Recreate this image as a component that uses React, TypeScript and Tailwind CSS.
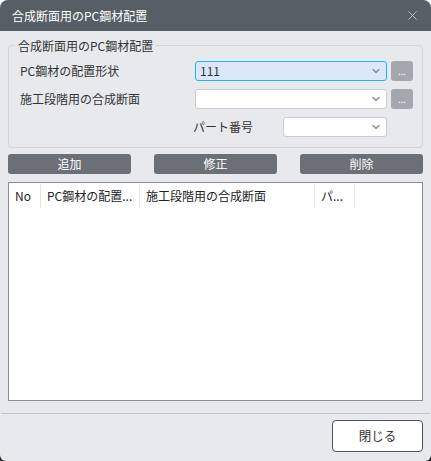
import { ChevronDown, X } from "lucide-react";

const font = { fontFamily: '"Noto Sans CJK JP", "Noto Sans", sans-serif' };

const Select = ({ value, active, className }: { value?: string; active?: boolean; className: string }) => (
  <div
    className={
      active
        ? `flex h-[20px] items-center justify-between rounded-[3px] border border-[#1db6ef] bg-[#dbe8fa] pl-[4px] pr-[4px] ${className}`
        : `flex h-[20px] items-center justify-between rounded-[3px] border border-[#c9cbd0] bg-white pl-[4px] pr-[4px] ${className}`
    }
  >
    <span className="text-[12px] leading-none text-[#333]">{value}</span>
    <ChevronDown size={12} strokeWidth={3} className="text-[#8d9096]" />
  </div>
);

const MoreButton = () => (
  <div className="flex h-[20px] w-[22px] items-center justify-center rounded-[3px] bg-[#a4a8ae] text-[9px] leading-none text-white">
    ...
  </div>
);

const columns = [
  { label: "No", w: "w-[32px]" },
  { label: "PC鋼材の配置...", w: "w-[99px]" },
  { label: "施工段階用の合成断面", w: "w-[175px]" },
  { label: "パ...", w: "w-[40px]" },
];

export default function App() {
  return (
    <div className="h-[461px] w-[431px] bg-[linear-gradient(to_bottom,#ffffff_0px,#ffffff_455px,#2a2a2a_455px)]" style={font}>
      <div className="flex h-full w-full flex-col overflow-hidden rounded-t-[8px] rounded-b-[6px] bg-[#e8e9ed]">
        {/* title bar */}
        <div className="flex h-[31px] shrink-0 items-center justify-between bg-[#575e66] pl-[12px] pr-[11px]">
          <span className="text-[12px] text-white">合成断面用のPC鋼材配置</span>
          <X size={15} strokeWidth={1.2} className="text-[#d9dbde]" />
        </div>

        <div className="flex flex-1 flex-col px-[8px] pt-[6px]">
          <fieldset className="rounded-[4px] border border-[#d2d4d9] pb-[10px] pl-[11px] pr-[8px]">
            <legend className="ml-[-5px] px-[3px] text-[12px] leading-[17px] text-[#333]">合成断面用のPC鋼材配置</legend>
            <div className="mt-[7px] flex flex-col gap-[8px]">
              <div className="flex items-center">
                <span className="w-[175px] text-[12px] text-[#333]">PC鋼材の配置形状</span>
                <Select value="111" active className="w-[192px]" />
                <div className="ml-[4px]">
                  <MoreButton />
                </div>
              </div>
              <div className="flex items-center">
                <span className="w-[175px] text-[12px] text-[#333]">施工段階用の合成断面</span>
                <Select className="w-[192px]" />
                <div className="ml-[4px]">
                  <MoreButton />
                </div>
              </div>
              <div className="flex items-center">
                <span className="ml-[173px] w-[90px] text-[12px] text-[#333]">パート番号</span>
                <Select className="w-[104px]" />
              </div>
            </div>
          </fieldset>

          {/* action buttons */}
          <div className="mt-[6px] flex justify-between">
            {["追加", "修正", "削除"].map((t) => (
              <div
                key={t}
                className="flex h-[20px] w-[123px] items-center justify-center rounded-[3px] bg-[#6b7077] text-[12px] leading-none text-white"
              >
                {t}
              </div>
            ))}
          </div>

          {/* list */}
          <div className="mt-[8px] h-[219px] w-[415px] border border-[#8b8e93] bg-white">
            <div className="flex h-[26px] items-stretch py-[1px]">
              {columns.map((c) => (
                <div
                  key={c.label}
                  className={`${c.w} flex items-center overflow-hidden whitespace-nowrap border-r border-[#e4e5e7] pl-[6px] text-[12px] leading-none text-[#222]`}
                >
                  {c.label}
                </div>
              ))}
            </div>
          </div>
        </div>

        {/* footer */}
        <div className="mx-[1px] mt-[11px] border-t border-[#c3c5c9]" />
        <div className="flex justify-end px-[8px] pb-[9px] pt-[6px]">
          <div className="flex h-[32px] w-[91px] items-center justify-center rounded-[4px] border border-[#4e545b] bg-white text-[12.5px] text-[#333]">
            閉じる
          </div>
        </div>
      </div>
    </div>
  );
}
